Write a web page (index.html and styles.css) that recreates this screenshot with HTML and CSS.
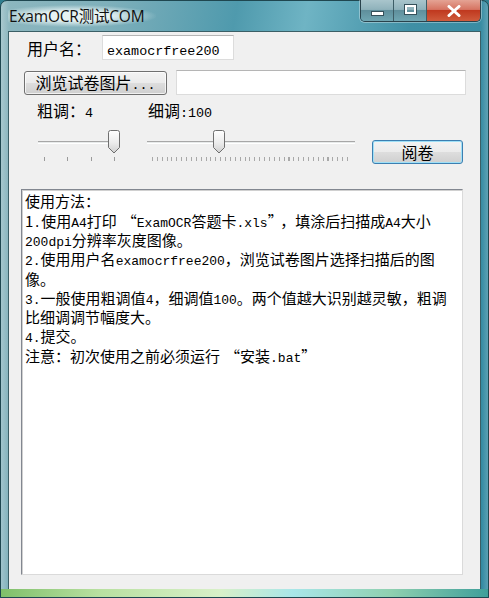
FILE: index.html
```html
<!DOCTYPE html>
<html lang="zh-CN">
<head>
  <meta charset="UTF-8" />
  <title>ExamOCR测试COM</title>
  <link rel="stylesheet" href="styles.css">
</head>
<body>
  <div class="window">
    <div class="titlebar">
      <div class="title">ExamOCR测试COM</div>
      <div class="caption-btns">
        <span class="cb cb-min"><i></i></span>
        <span class="cb cb-max"><i></i></span>
        <span class="cb cb-close">
          <svg width="14" height="12" viewBox="0 0 14 12"><path d="M2,1.5 L12,10.5 M12,1.5 L2,10.5" stroke="#fff" stroke-width="3" stroke-linecap="round"/></svg>
        </span>
      </div>
    </div>

    <div class="client">
      <div class="row-user">
        <span class="label">用户名：</span>
        <div class="edit edit-user"><span class="en">examocrfree200</span></div>
      </div>

      <div class="row-browse">
        <button class="btn btn-browse">浏览试卷图片<span class="en">...</span></button>
        <div class="edit edit-path"></div>
      </div>

      <div class="row-labels">
        <span class="label lbl-coarse">粗调：<span class="en">4</span></span>
        <span class="label lbl-fine">细调<span class="en">:100</span></span>
      </div>

      <div class="row-sliders">
        <div class="slider slider-coarse">
          <div class="track"></div>
          <div class="thumb" style="left: 70px">
            <svg width="12" height="24" viewBox="0 0 12 24">
              <defs>
                <linearGradient id="tg1" x1="0" y1="0" x2="0" y2="1">
                  <stop offset="0" stop-color="#ffffff"/>
                  <stop offset="0.55" stop-color="#ececec"/>
                  <stop offset="1" stop-color="#cfcfcf"/>
                </linearGradient>
              </defs>
              <path d="M2.5,0.5 H9.5 Q11.5,0.5 11.5,2.5 V17.5 L6,23 L0.5,17.5 V2.5 Q0.5,0.5 2.5,0.5 Z" fill="url(#tg1)" stroke="#6f6f6f"/>
            </svg>
          </div>
          <div class="ticks ticks-coarse"></div>
        </div>

        <div class="slider slider-fine">
          <div class="track"></div>
          <div class="thumb" style="left: 66px">
            <svg width="12" height="24" viewBox="0 0 12 24">
              <defs>
                <linearGradient id="tg2" x1="0" y1="0" x2="0" y2="1">
                  <stop offset="0" stop-color="#ffffff"/>
                  <stop offset="0.55" stop-color="#ececec"/>
                  <stop offset="1" stop-color="#cfcfcf"/>
                </linearGradient>
              </defs>
              <path d="M2.5,0.5 H9.5 Q11.5,0.5 11.5,2.5 V17.5 L6,23 L0.5,17.5 V2.5 Q0.5,0.5 2.5,0.5 Z" fill="url(#tg2)" stroke="#6f6f6f"/>
            </svg>
          </div>
          <div class="ticks ticks-fine"></div>
        </div>

        <button class="btn btn-read">阅卷</button>
      </div>

      <div class="memo">使用方法：<br>1<span class="en">.</span>使用<span class="en">A4</span>打印<span class="q-open">“</span><span class="en">ExamOCR</span>答题卡<span class="en">.xls</span><span class="q-close">”</span>，填涂后扫描成<span class="en">A4</span>大小<br><span class="en">200dpi</span>分辨率灰度图像。<br><span class="en">2.</span>使用用户名<span class="en">examocrfree200</span>，浏览试卷图片选择扫描后的图<br>像。<br><span class="en">3.</span>一般使用粗调值<span class="en">4</span>，细调值<span class="en">100</span>。两个值越大识别越灵敏，粗调<br>比细调调节幅度大。<br><span class="en">4.</span>提交。<br>注意：初次使用之前必须运行<span class="q-open">“</span>安装<span class="en">.bat</span><span class="q-close">”</span></div>
    </div>
  </div>
</body>
</html>
```

FILE: styles.css
```css
body {
  margin: 0;
  padding: 0;
  background: #2f7e8f;
  font-family: "Noto Sans CJK SC", sans-serif;
  overflow: hidden;
}
.window {
  width: 489px;
  height: 598px;
  box-sizing: border-box;
  border: 1px solid #1f4750;
  border-radius: 7px 7px 0 0;
  padding: 0 7px 7px 7px;
  display: flex;
  flex-direction: column;
  background:
    linear-gradient(to right, rgba(255,255,255,0.25) 0, rgba(255,255,255,0) 8px, rgba(255,255,255,0) 480px, rgba(255,255,255,0.2) 100%),
    linear-gradient(100deg, #8db7bf 0, #7fb0bb 18%, #4f9aad 40%, #6fb4c4 52%, #3f8fa5 70%, #2f88a0 100%);
  position: relative;
}
.window::after {
  content: "";
  position: absolute;
  left: 0;
  right: 0;
  bottom: 0;
  height: 8px;
  background: linear-gradient(to right, #7fbf6a 0, #b8e0a0 20%, #d8f0c8 45%, #a8e6e8 60%, #8fd0b0 80%, #3f9f9a 100%);
}
.titlebar {
  height: 30px;
  display: flex;
  align-items: flex-start;
  justify-content: space-between;
}
.title {
  margin-top: 4px;
  padding: 0 12px 0 1px;
  font-family: "Open Sans", "Noto Sans CJK SC", sans-serif;
  font-size: 15.5px;
  line-height: 22px;
  color: #101010;
  letter-spacing: -0.2px;
  background: radial-gradient(ellipse at 45% 50%, rgba(235,245,245,0.95) 30%, rgba(235,245,245,0) 72%);
}
.caption-btns {
  display: flex;
  margin-top: -1px;
  height: 21px;
  border: 1px solid #29424c;
  border-top: none;
  border-radius: 0 0 5px 5px;
  overflow: hidden;
  box-shadow: 0 0 0 1px rgba(255,255,255,0.35);
}
.cb {
  display: flex;
  align-items: center;
  justify-content: center;
  height: 21px;
}
.cb-min, .cb-max {
  width: 32px;
  background: linear-gradient(to bottom, #a9c5cc 0, #8fb2bb 45%, #5f8f9c 50%, #6fa6b2 100%);
  border-right: 1px solid #3d5d66;
}
.cb-min i {
  display: block;
  width: 11px;
  height: 3px;
  margin-top: 6px;
  background: #fff;
  border: 1px solid #35505a;
}
.cb-max i {
  display: block;
  width: 7px;
  height: 5px;
  border: 2px solid #fff;
  outline: 1px solid #35505a;
  margin-top: -3px;
}
.cb-close {
  width: 53px;
  background: linear-gradient(to bottom, #e4a394 0, #d67462 45%, #c0391f 50%, #cf5b3c 100%);
}

.client {
  flex: 1;
  background: #f0f0f0;
  border: 1px solid #3b5f66;
  display: flex;
  flex-direction: column;
  font-size: 16px;
  color: #000;
}
.en {
  font-family: "Liberation Mono", monospace;
  font-size: 13.4px;
  line-height: 1;
}
.q-open {
  margin-left: 5px;
}
.q-close {
  margin-right: 5px;
}
.label {
  font-size: 16px;
  line-height: 18px;
}

.row-user {
  display: flex;
  align-items: center;
  margin-top: 3px;
  padding-left: 18px;
}
.row-user .label {
  width: 75px;
}
.edit {
  background: #fff;
  border: 1px solid #dcdcdc;
  border-top-color: #b5b5b5;
  box-sizing: border-box;
}
.edit-user {
  width: 132px;
  height: 25px;
  padding: 3px 0 0 4px;
  line-height: 18px;
}

.row-browse {
  display: flex;
  align-items: center;
  margin-top: 10px;
  padding-left: 15px;
}
.btn {
  font-family: "Noto Sans CJK SC", sans-serif;
  font-size: 16px;
  color: #000;
  border-radius: 3px;
  padding: 0;
  box-sizing: border-box;
}
.btn-browse {
  width: 143px;
  height: 24px;
  line-height: 20px;
  border: 1px solid #707070;
  background: linear-gradient(to bottom, #f3f3f3 0, #ebebeb 48%, #dddddd 52%, #cfcfcf 100%);
  box-shadow: inset 0 0 0 1px rgba(255,255,255,0.7);
}
.edit-path {
  width: 290px;
  height: 25px;
  margin-left: 9px;
}

.row-labels {
  display: flex;
  margin-top: 6px;
  padding-left: 28px;
}
.lbl-coarse {
  width: 111px;
}

.row-sliders {
  display: flex;
  align-items: flex-start;
  margin-top: 10px;
}
.slider {
  position: relative;
  height: 34px;
}
.track {
  position: absolute;
  left: 0;
  right: 0;
  top: 11px;
  height: 1px;
  border-top: 1px solid #a7a7a7;
  border-bottom: 1px solid #ffffff;
  background: #e7eaea;
}
.thumb {
  position: absolute;
  top: 0;
  width: 12px;
  height: 24px;
}
.thumb svg {
  display: block;
}
.ticks {
  position: absolute;
  top: 27px;
  height: 4px;
}
.slider-coarse {
  width: 78px;
  margin-left: 29px;
}
.ticks-coarse {
  left: 6px;
  width: 72px;
  background: repeating-linear-gradient(to right, #9a9a9a 0, #9a9a9a 1px, transparent 1px, transparent 23.33px);
}
.slider-fine {
  width: 208px;
  margin-left: 31px;
}
.ticks-fine {
  left: 5px;
  width: 197px;
  background: repeating-linear-gradient(to right, #a8a8a8 0, #a8a8a8 1px, transparent 1px, transparent 4.875px);
}
.btn-read {
  width: 91px;
  height: 24px;
  line-height: 20px;
  margin-left: 17px;
  margin-top: 10px;
  border: 1px solid #3c7fb1;
  background: linear-gradient(to bottom, #f3f3f3 0, #ebebeb 48%, #dddddd 52%, #cfcfcf 100%);
  box-shadow: inset 0 0 0 1px #9fe0f7;
}

.memo {
  margin: 25px 17px 14px 12px;
  flex: 1;
  background: #fff;
  border: 1px solid #828790;
  border-right-color: #dadada;
  border-bottom-color: #dadada;
  box-shadow: inset 1px 1px 0 #d0d0d0;
  padding: 1px 0 0 3px;
  font-size: 15px;
  line-height: 19.3px;
  white-space: nowrap;
  overflow: hidden;
}
.memo .en {
  font-size: 13px;
}
```
